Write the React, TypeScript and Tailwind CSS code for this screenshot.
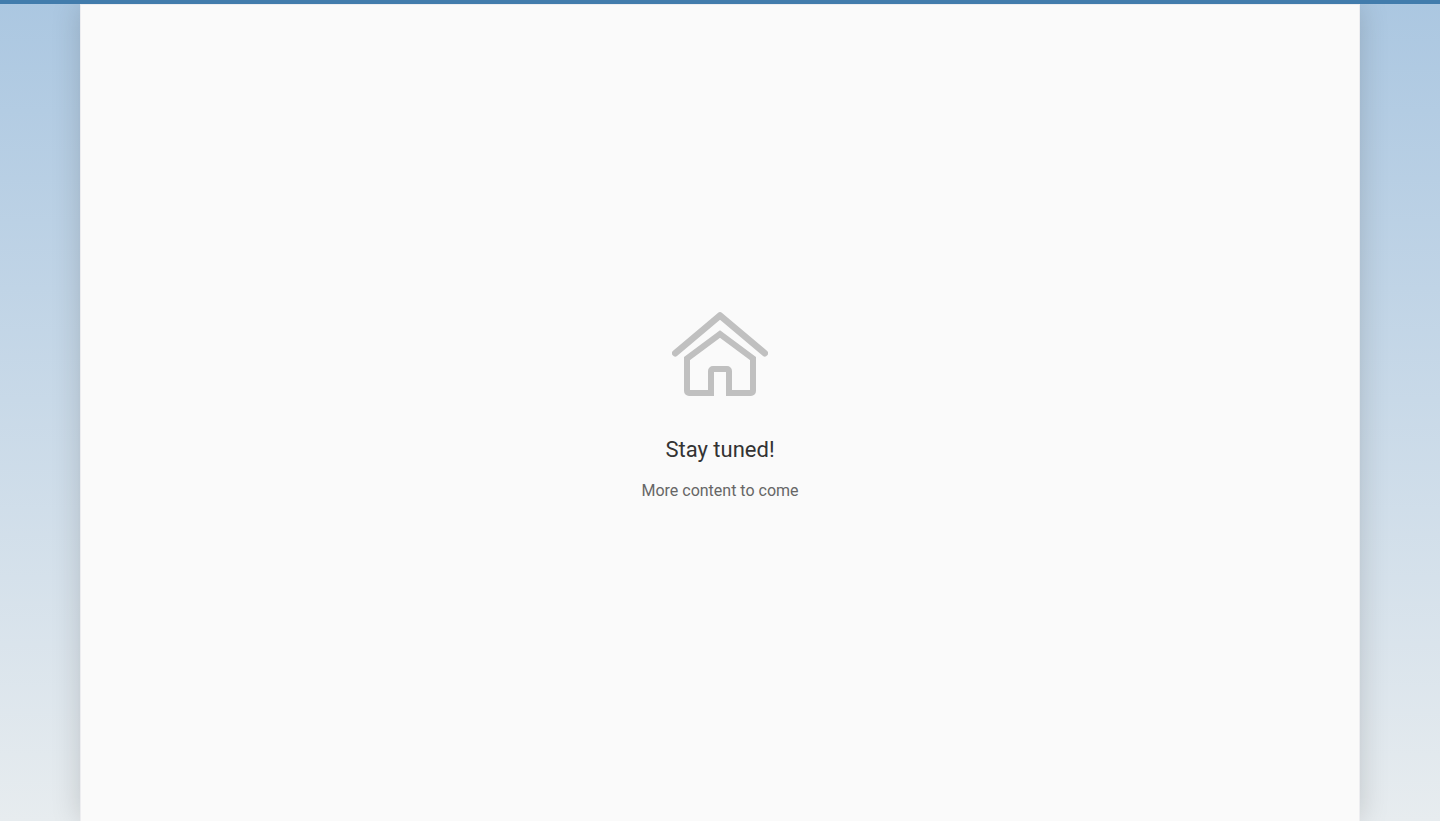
function HomeIcon() {
  return (
    <svg
      viewBox="0 0 96 96"
      className="size-24 text-[#c0c0c0]"
      fill="none"
      stroke="currentColor"
      strokeWidth="6"
      aria-hidden="true"
    >
      <path
        d="M3.2 47.2 48 9.4l44.8 37.8"
        strokeWidth="6.5"
        strokeLinecap="round"
        strokeLinejoin="round"
      />
      <path d="M42 87H17a2 2 0 0 1-2-2V52.5L48 28l33 24.5V85a2 2 0 0 1-2 2H54" />
      <path d="M39 87V65a2 2 0 0 1 2-2h14a2 2 0 0 1 2 2v22" />
    </svg>
  );
}

export default function App() {
  return (
    <div className="flex min-h-screen flex-col bg-linear-to-b from-[#abc7e1] to-[#e7ecef] font-['Roboto','Liberation_Sans',sans-serif]">
      <div className="relative h-1 bg-[#427cac]" />
      <div className="flex grow overflow-hidden px-20">
        <main className="flex grow flex-col items-center justify-center border border-b-0 border-[#ededf0] bg-[#fafafa] pb-[17px] text-center shadow-[0_0_28px_rgba(0,0,0,0.16)]">
          <HomeIcon />
          <h1 className="mt-8 text-[22px] leading-8 text-[#333333]">Stay tuned!</h1>
          <p className="mt-[13px] text-base leading-6 text-[#666666]">More content to come</p>
        </main>
      </div>
    </div>
  );
}
